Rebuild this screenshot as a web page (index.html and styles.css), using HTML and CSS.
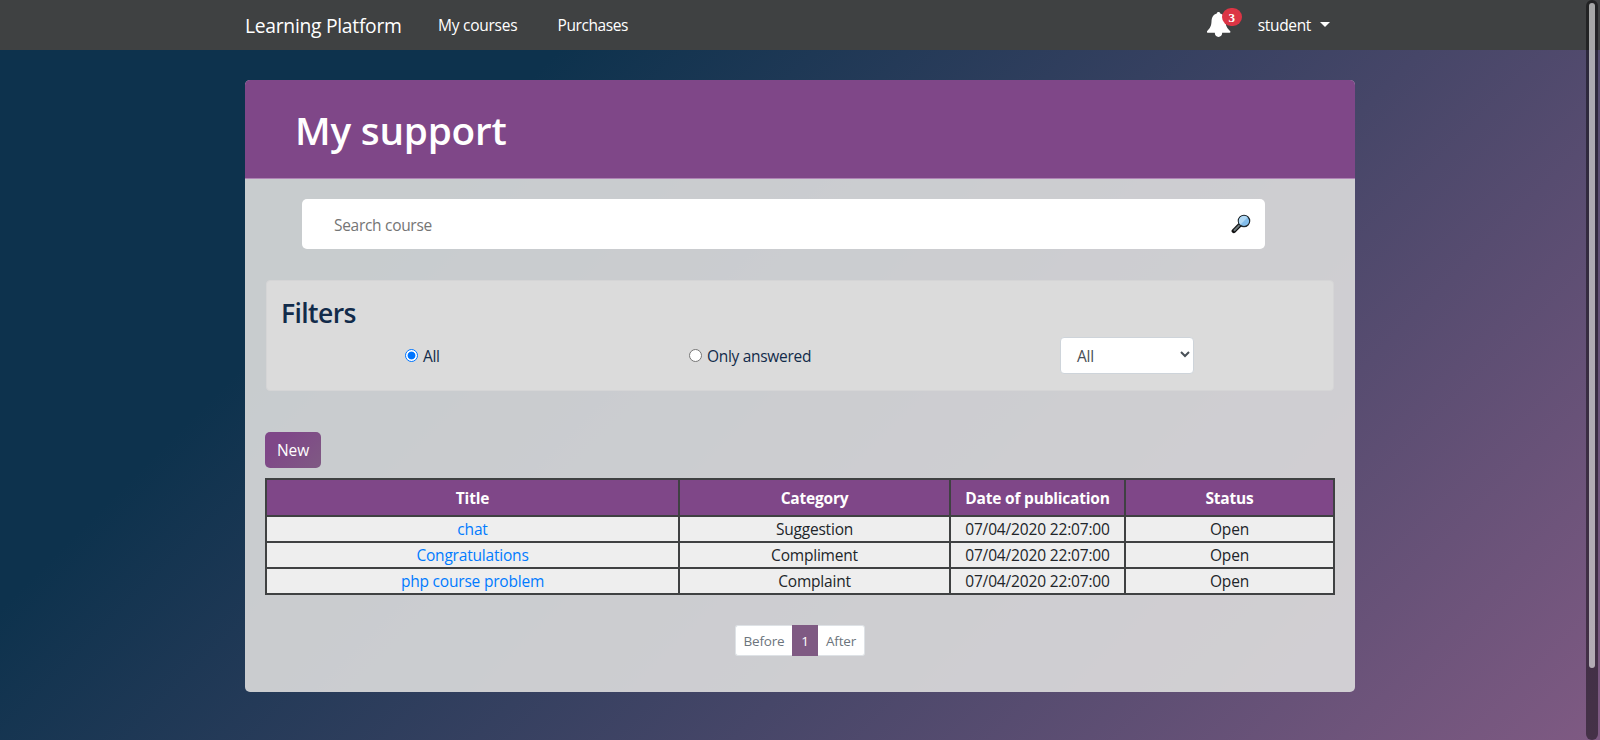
FILE: index.html
```html
<!DOCTYPE html>
<html lang="en">
<head>
<meta charset="utf-8">
<title>My support</title>
<link rel="stylesheet" href="styles.css">
</head>
<body>
<nav class="navbar">
  <a class="brand" href="#">Learning Platform</a>
  <a class="nav-link courses" href="#">My courses</a>
  <a class="nav-link" href="#">Purchases</a>
  <div class="user-area">
    <div class="bell">
      <svg width="24" height="26" viewBox="0 0 24 26"><path fill="#fff" d="M11.500 0c1 0 1.700.7 1.700 1.600C16.600 2.400 18.300 5.500 18.500 9.500c.2 4.500 1.600 6.500 4.700 9.800.5.600.2 1.400-.6 1.400h-7.400c0 2.300-1.500 4.200-3.700 4.200s-3.700-1.900-3.700-4.200H.5c-.8 0-1-.8-.5-1.400C3.100 16 4.300 14 4.500 9.500c.2-4 1.900-7.100 5.300-7.900C9.800.7 10.500 0 11.500 0z"/></svg>
      <span class="badge">3</span>
    </div>
    <a class="user" href="#">student<span class="caret"></span></a>
  </div>
</nav>
<main class="card">
  <header class="card-header"><h1>My support</h1></header>
  <div class="card-body">
    <div class="search">
      <input type="text" placeholder="Search course">
      <svg width="20" height="20" viewBox="0 0 20 20"><path d="M2.800 17 9 10.800" stroke="#111" stroke-width="4.400" stroke-linecap="round"/><path d="M3.500 16.200 8.800 10.900" stroke="#6b777b" stroke-width="2" stroke-linecap="round"/><circle cx="13" cy="7" r="5.700" fill="#83beec" stroke="#222b30" stroke-width="1.200"/><path d="M9.300 10.700a5.200 5.200 0 0 1 7.400-7.400z" fill="#b1d9f5"/></svg>
    </div>
    <section class="filters">
      <h3>Filters</h3>
      <div class="options">
        <label><span class="radio checked"></span>All</label>
        <label><span class="radio"></span>Only answered</label>
        <div class="select">All<svg width="10" height="7" viewBox="0 0 10 7"><path d="M1 1l4 4 4-4" fill="none" stroke="#495057" stroke-width="2"/></svg></div>
      </div>
    </section>
    <button class="new">New</button>
    <table>
      <colgroup><col class="c1"><col class="c2"><col class="c3"><col class="c4"></colgroup>
      <thead><tr><th>Title</th><th>Category</th><th>Date of publication</th><th>Status</th></tr></thead>
      <tbody>
        <tr><td><a href="#">chat</a></td><td>Suggestion</td><td>07/04/2020 22:07:00</td><td>Open</td></tr>
        <tr><td><a href="#">Congratulations</a></td><td>Compliment</td><td>07/04/2020 22:07:00</td><td>Open</td></tr>
        <tr><td><a href="#">php course problem</a></td><td>Complaint</td><td>07/04/2020 22:07:00</td><td>Open</td></tr>
      </tbody>
    </table>
    <div class="pagination"><span class="before">Before</span><span class="active">1</span><span class="after">After</span></div>
  </div>
</main>
<div class="scrollbar"><div class="thumb"></div></div>
</body>
</html>
```
FILE: styles.css
```css
*{box-sizing:border-box}
html{height:100%;overflow:hidden}
body{margin:0;height:740px;overflow:hidden;position:relative;background:linear-gradient(315deg,#7f5a83 0%,#0d324d 74%);font-family:"Open Sans","Noto Sans",sans-serif;font-size:15.5px;letter-spacing:-.2px;line-height:24px;color:#212529}
a{text-decoration:none;color:#007bff}
h1,h3{margin:0}
.navbar{height:50px;background:#3f4142;display:flex;align-items:center;padding:0 270px 0 245px}
.navbar a{color:#fff}
.brand{font-size:19.3px;letter-spacing:-.28px;width:193px;padding-top:2px}
.nav-link{width:119.500px}
.navbar .nav-link{letter-spacing:-.4px}
.navbar .courses{letter-spacing:-.25px}
.user-area{margin-left:auto;display:flex;align-items:center}
.bell{position:relative;width:51px;height:26px}
.bell svg{display:block}
.badge{position:absolute;left:15px;top:-4px;width:20px;height:18px;border-radius:9px;background:#dc3545;color:#fff;font:bold 13px/19px "Liberation Serif",serif;letter-spacing:0;text-align:center}
.user{display:flex;align-items:center;letter-spacing:-.35px}
.caret{border:5px solid transparent;border-top-color:#fff;border-bottom:0;margin:-2px 0 0 9px}
.card{margin:30px 0 0 245px;width:1110px;height:612px;border-radius:5px;overflow:hidden;background:rgba(221,221,221,.9)}
.card-header{height:99px;padding:22px 50px 0;background:#7f4788;border-bottom:1px solid #af85b5;color:#fff}
h1{font-size:38.700px;line-height:57px;font-weight:600;letter-spacing:-.2px}
.card-body{padding:20px 20px 0 20px}
.search{margin-left:37px;width:963px;height:50px;background:#fff;border-radius:5px;display:flex;align-items:center;justify-content:space-between;padding:0 14px 0 32px}
.search input{border:0;outline:0;padding:1px 0 0;font:inherit;letter-spacing:-.3px;width:400px;background:none}
.search input::placeholder{color:#757575}
.filters{margin:31px 1px 0;height:111px;background:#dbdbdb;border:1px solid #d5d5d6;border-radius:4px;padding:15px 15px 15px 14px;color:#122b4a}
h3{font-size:26.500px;font-weight:600;line-height:34px;letter-spacing:-.6px}
.options{display:flex;align-items:center;height:36px;margin-top:7px;padding-left:124px}
.options label{display:flex;align-items:center;width:284px;padding-top:2px;letter-spacing:-.3px}
.radio{width:13px;height:13px;border:1px solid #767676;border-radius:50%;background:#fff;margin:-2px 5px 0 0}
.checked{border-color:#0075ff;background:radial-gradient(circle,#0075ff 0 3.500px,#fff 4.300px)}
.select{width:134px;height:37px;margin-left:87px;border:1px solid #ced4da;border-radius:4px;background:#fff;color:#495057;display:flex;align-items:center;justify-content:space-between;padding:2px 3px 0 16px}
.select svg{margin-top:-4px}
.new{display:block;margin:41px 0 10px;width:56px;height:36px;border:0;border-radius:5px;background:linear-gradient(315deg,#7f5a83 0%,#7f4788 74%);color:#fff;font:inherit;letter-spacing:-.1px;padding:0}
table{width:1070px;table-layout:fixed;border-collapse:collapse;text-align:center}
.c1{width:413px}.c2{width:271px}.c3{width:175px}.c4{width:209px}
th,td{border:2px solid #3f4142;padding:0;height:26px;line-height:24px;background:#eee}
th{height:37px;background:#7f4788;color:#fff;font-weight:700}
td:nth-child(3){letter-spacing:-.16px}
.pagination{display:flex;width:130px;height:31px;margin:30px auto 0;font-size:13.500px;letter-spacing:-.2px;line-height:31px;text-align:center;color:#6c757d}
.pagination span{background:#fff;border:1px solid #dee2e6;line-height:31px}
.pagination .before{width:57px;border-right:0;border-radius:3px 0 0 3px}
.pagination .active{width:26px;background:#7f5a83;border-color:#7f5a83;color:#fff}
.pagination .after{width:47px;border-left:0;border-radius:0 3px 3px 0}
.scrollbar{position:absolute;left:1586px;top:0;width:12px;height:740px;border-radius:6px;background:rgba(0,0,0,.45);padding:3px}
.thumb{height:665px;border-radius:3px;background:rgba(255,255,255,.6)}
```
